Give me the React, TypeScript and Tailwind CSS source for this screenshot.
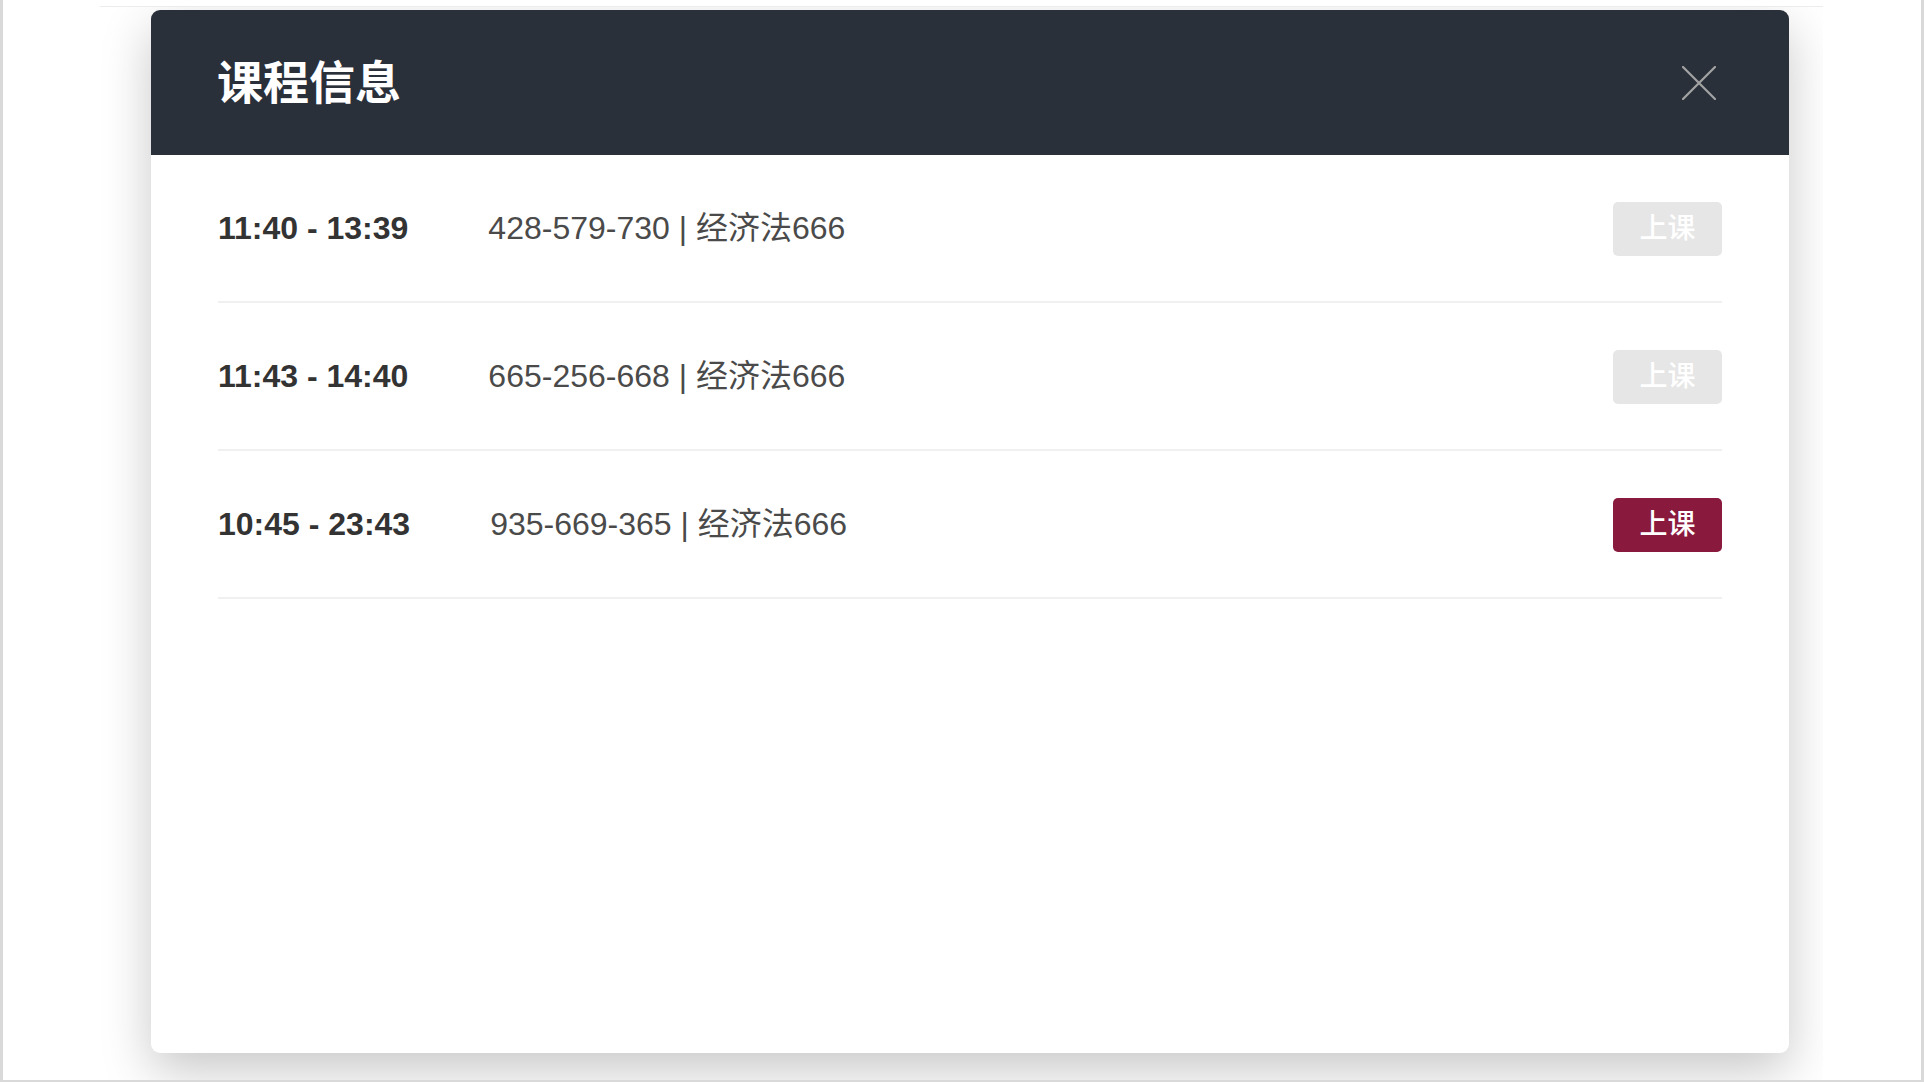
type Course = {
  time: string;
  code: string;
  name: string;
  active: boolean;
};

const courses: Course[] = [
  { time: "11:40 - 13:39", code: "428-579-730", name: "经济法666", active: false },
  { time: "11:43 - 14:40", code: "665-256-668", name: "经济法666", active: false },
  { time: "10:45 - 23:43", code: "935-669-365", name: "经济法666", active: true },
];

const font = "font-['Liberation_Sans','Noto_Sans_CJK_SC',sans-serif]";

function CloseIcon() {
  return (
    <svg width="34" height="34" viewBox="0 0 34 34" className="shrink-0">
      <path d="M1 1 L33 33 M33 1 L1 33" stroke="#a3a3a3" strokeWidth="2.2" strokeLinecap="round" />
    </svg>
  );
}

function CourseRow({ course }: { course: Course }) {
  return (
    <div className="flex h-[148px] items-center border-b-2 border-[#f0f0f0] pb-[1px]">
      <span className="text-[32px] font-bold text-[#333333]">{course.time}</span>
      <span className="ml-[80px] text-[32px] text-[#4a4a4a]">
        {course.code} | {course.name}
      </span>
      <button
        disabled={!course.active}
        className={
          course.active
            ? "ml-auto mt-[2px] flex h-[54px] w-[109px] items-center justify-center rounded-[5px] bg-[#891a3e] text-[28px] font-medium text-white"
            : "ml-auto mt-[2px] flex h-[54px] w-[109px] items-center justify-center rounded-[5px] bg-[#e6e6e6] text-[28px] font-medium text-white"
        }
      >
        上课
      </button>
    </div>
  );
}

export default function App() {
  return (
    <div className={`h-[1082px] w-full border-x-[3px] border-b-2 border-[#d9d9d9] bg-white ${font}`}>
      <div className="flex h-full flex-col pt-[6px]">
        <div className="ml-[97px] mr-[98px] flex-1 overflow-hidden border-t border-[#ececec] bg-white pl-[51px] pt-[3px]">
          <div className="flex h-[1043px] w-[1638px] flex-col overflow-hidden rounded-[9px] bg-white shadow-[0_18px_50px_rgba(0,0,0,0.22)]">
            <div className="flex h-[145px] shrink-0 items-center justify-between bg-[#2a303a] pl-[66px] pr-[73px]">
              <h1 className="text-[46px] font-bold leading-none text-white">课程信息</h1>
              <CloseIcon />
            </div>
            <div className="flex flex-col px-[67px]">
              {courses.map((c) => (
                <CourseRow key={c.code} course={c} />
              ))}
            </div>
          </div>
        </div>
      </div>
    </div>
  );
}
